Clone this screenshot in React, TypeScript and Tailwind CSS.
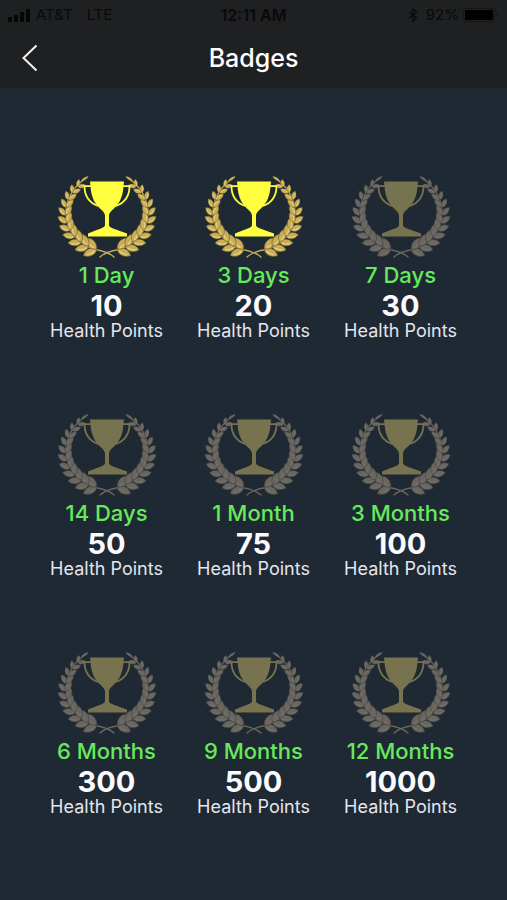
type Badge = { period: string; points: number; earned: boolean };

const badges: Badge[] = [
  { period: '1 Day', points: 10, earned: true },
  { period: '3 Days', points: 20, earned: true },
  { period: '7 Days', points: 30, earned: false },
  { period: '14 Days', points: 50, earned: false },
  { period: '1 Month', points: 75, earned: false },
  { period: '3 Months', points: 100, earned: false },
  { period: '6 Months', points: 300, earned: false },
  { period: '9 Months', points: 500, earned: false },
  { period: '12 Months', points: 1000, earned: false },
];

const PAIRS = 11;

/* One leaf, lying along the x axis from its stalk at the origin. */
const LEAF = 'M0 0C2 -3.6 7 -4 11 -0.4C8 3.4 3 3.4 0 0Z';

type Leaf = { x: number; y: number; angle: number; scale: number };

/* Leaf pairs follow an ellipse from the foot of the wreath to its tip. */
const leaves: Leaf[] = Array.from({ length: PAIRS }).flatMap((_, i) => {
  const k = i / (PAIRS - 1);
  const t = 1.32 - 2.1 * k;
  const x = 50 - 41 * Math.cos(t);
  const y = 38 + 37 * Math.sin(t);
  const heading = (Math.atan2(-37 * Math.cos(t), -41 * Math.sin(t)) * 180) / Math.PI;
  const scale = 1.45 - 0.7 * k;
  return [
    { x, y, angle: heading - 38, scale: scale * 0.95 },
    { x, y, angle: heading + 32, scale },
  ];
});

function Branch({ earned }: { earned: boolean }) {
  const fill = earned ? '#c9ae55' : '#6a665f';
  const edge = earned ? '#5f522f' : '#3c4144';
  const shine = earned ? '#e6d080' : '#736f67';
  return (
    <g>
      <path
        d="M57 82Q51 76.500 38 74.500C22 70 9 56 9 38C9 24 17 11 28 4"
        fill="none"
        stroke={fill}
        strokeWidth="1.300"
        strokeLinecap="round"
      />
      {leaves.map((l, i) => (
        <g key={i} transform={`translate(${l.x} ${l.y}) rotate(${l.angle}) scale(${l.scale})`}>
          <path d={LEAF} fill={fill} stroke={edge} strokeWidth="0.400" />
          <path d="M2 -0.800Q5 -2 8.500 -0.900" stroke={shine} strokeWidth="1" fill="none" />
        </g>
      ))}
      <path d="M24 6Q26 2 31.500 1.200Q30 5 24 6Z" fill={fill} />
    </g>
  );
}

function Emblem({ earned }: { earned: boolean }) {
  const cup = earned ? '#ffff3f' : '#77734f';
  return (
    <svg viewBox="0 0 100 84" className="h-[84px] w-[100px]" aria-hidden="true">
      <Branch earned={earned} />
      <g transform="translate(100 0) scale(-1 1)">
        <Branch earned={earned} />
      </g>
      <g fill={cup}>
        <path d="M33 6.500H67L66.500 11C66 20 63.500 27 58 32.500C54.500 36 52 37.500 52 41V50C52 52.500 56.500 53.500 61.500 55.500L70 58.500V61.500H31V58.500L38.500 55.500C43.500 53.500 48 52.500 48 50V41C48 37.500 45.500 36 42 32.500C36.500 27 34 20 33.500 11Z" />
        <g fill="none" stroke={cup} strokeWidth="1.800">
          <path d="M34 11.200H27.500C27.500 20 32 27.500 41 31" />
          <path d="M66 11.200H72.500C72.500 20 68 27.500 59 31" />
        </g>
      </g>
    </svg>
  );
}

function StatusBar() {
  return (
    <div className="grid h-7 grid-cols-3 items-center px-2 pt-px text-[15px] leading-5 text-[#090a0b]">
      <div className="flex items-center gap-1">
        <svg viewBox="0 0 24 14" className="h-[14px] w-6" fill="#050606" aria-hidden="true">
          <rect x="0" y="9" width="4" height="5" rx="1" />
          <rect x="6" y="7" width="4" height="7" rx="1" />
          <rect x="12" y="4" width="4" height="10" rx="1" />
          <rect x="18" y="1" width="4" height="13" rx="1" />
        </svg>
        <span>AT&amp;T</span>
        <span className="ml-[10px]">LTE</span>
      </div>
      <span className="text-center text-base leading-5 font-semibold">12:11 AM</span>
      <div className="flex items-center justify-end gap-1">
        <svg viewBox="0 0 10 16" className="mr-1 h-[14px] w-[10px]" fill="none" stroke="currentColor" strokeWidth="1.600" aria-hidden="true">
          <path d="M1 4.500L9 11.500L5 15V1L9 4.500L1 11.500" />
        </svg>
        <span>92%</span>
        <svg viewBox="0 0 36 14" className="h-[14px] w-9" aria-hidden="true">
          <rect x="0.500" y="0.500" width="31" height="13" rx="3" fill="none" stroke="#151617" />
          <rect x="2" y="2" width="28" height="10" rx="1" fill="#000" />
          <path d="M33.500 5Q35.500 7 33.500 9Z" fill="#0f1011" />
        </svg>
      </div>
    </div>
  );
}

export default function App() {
  return (
    <div className="min-h-screen bg-[#1f2933] font-['Inter','Liberation_Sans',sans-serif]">
      <header className="bg-[#1f2021]">
        <StatusBar />
        <div className="grid h-[60px] grid-cols-3 items-center">
          <button type="button" aria-label="Back" className="flex h-11 w-11 items-center pl-[22px]">
            <svg viewBox="0 0 16 28" className="h-7 w-4" fill="none" stroke="#f4f4f4" strokeWidth="2" aria-hidden="true">
              <path d="M14.500 1.500L1.500 14L14.500 26.500" />
            </svg>
          </button>
          <h1 className="text-center text-[25px] leading-8 font-medium text-white">Badges</h1>
        </div>
      </header>
      <main className="px-[33px] pt-[87px] pb-10">
        <ul className="grid grid-cols-3 gap-y-[71px]">
          {badges.map((badge) => (
            <li key={badge.period} className="flex flex-col items-center whitespace-nowrap">
              <Emblem earned={badge.earned} />
              <h2 className="mt-1 text-[22px] leading-6 font-medium text-[#66ea5c]">{badge.period}</h2>
              <p className="flex flex-col items-center text-[#e4e6ee]">
                <strong className="mt-[5px] text-[29px] leading-7 font-bold text-[#fafaff]">{badge.points}</strong>
                <span className="text-lg leading-[22px]">Health Points</span>
              </p>
            </li>
          ))}
        </ul>
      </main>
    </div>
  );
}
